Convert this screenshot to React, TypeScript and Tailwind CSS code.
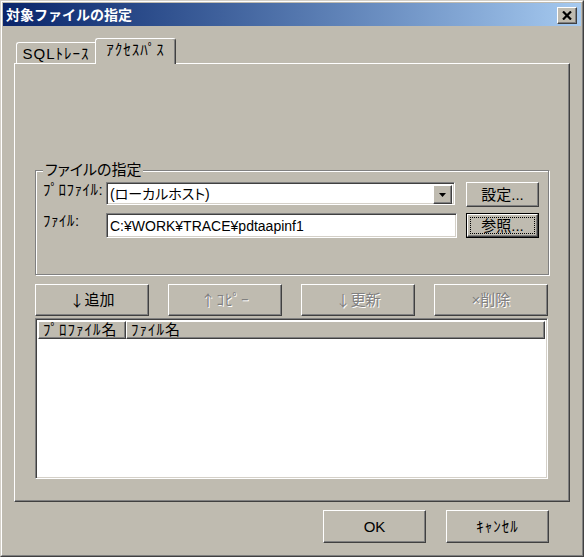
import type { ReactNode } from "react";

const face = "bg-[#bfbbb0]";
const raised =
  "border border-t-white border-l-white border-r-[#404040] border-b-[#404040] shadow-[inset_-1px_-1px_#808080]";
const sunken =
  "border border-t-[#808080] border-l-[#808080] border-r-white border-b-white shadow-[inset_1px_1px_#404040,inset_-1px_-1px_#d4d0c8]";
const grayed = "text-[#808080] [text-shadow:1px_1px_0_#ffffff]";
const arrow = "font-['Noto_Sans_CJK_JP',sans-serif]";

function Button({
  children,
  className = "",
  disabled = false,
}: {
  children: ReactNode;
  className?: string;
  disabled?: boolean;
}) {
  return (
    <button
      type="button"
      className={`${raised} ${face} flex items-center justify-center whitespace-nowrap leading-[16px] ${
        disabled ? grayed : "text-black"
      } ${className}`}
    >
      {children}
    </button>
  );
}

export default function App() {
  return (
    <div
      className={`h-[557px] w-[584px] ${face} font-['Liberation_Sans','Noto_Sans_CJK_JP',sans-serif] text-[15px] text-black`}
    >
      <div className="flex h-full flex-col border border-t-[#d4d0c8] border-l-[#d4d0c8] border-r-[#404040] border-b-[#404040]">
        <div className="flex flex-1 flex-col border border-t-white border-l-white border-r-[#808080] border-b-[#808080] p-px">
          {/* title bar */}
          <div className="flex h-[23px] items-center justify-between bg-linear-to-r from-[#0a246a] to-[#a6caf0] pl-[3px] pr-[4px]">
            <span className="text-[14px] font-bold leading-[16px] text-white">
              対象ファイルの指定
            </span>
            <button
              type="button"
              className={`${raised} ${face} mt-px flex h-[17px] w-[20px] items-center justify-center`}
            >
              <svg width="10" height="9" viewBox="0 0 10 9">
                <path d="M1 0.5 L9 8.5 M9 0.5 L1 8.5" stroke="#000" strokeWidth="2.2" />
              </svg>
            </button>
          </div>

          {/* tabs */}
          <div className="mt-[12px] flex items-end pl-[13px]">
            <div className="flex h-[21px] w-[79px] items-center justify-center whitespace-nowrap rounded-tl-[3px] border-l border-t border-white pt-[1px] leading-[16px] tracking-[1px]">
              SQLﾄﾚｰｽ
            </div>
            <div
              className={`relative z-10 -mb-px flex h-[26px] w-[81px] items-start justify-center whitespace-nowrap rounded-t-[3px] border-l border-r border-t border-white border-r-[#404040] ${face} pt-[3px] leading-[16px] tracking-[1px] shadow-[inset_-1px_0_#808080]`}
            >
              ｱｸｾｽﾊﾟｽ
            </div>
          </div>

          {/* tab panel */}
          <div className="ml-[11px] flex h-[439px] w-[556px] flex-col border border-t-white border-l-white border-r-[#404040] border-b-[#404040] shadow-[inset_-1px_-1px_#808080]">
            <fieldset className="ml-[20px] mt-[99px] w-[514px] border border-[#808080] pb-[36px] pl-[7px] pt-[5px] shadow-[inset_1px_1px_#ffffff,1px_1px_#ffffff]">
              <legend className={`${face} px-[2px] leading-[14px] [font-feature-settings:'palt']`}>
                ファイルの指定
              </legend>
              <div className="flex flex-col gap-[6px]">
                <div className="flex h-[25px] items-start">
                  <span className="w-[63px] shrink-0 whitespace-nowrap leading-[16px] tracking-[0.5px]">
                    ﾌﾟﾛﾌｧｲﾙ:
                  </span>
                  <div className={`${sunken} flex h-[23px] w-[349px] bg-white p-[2px]`}>
                    <span className="flex-1 pl-[1px] text-[14px] leading-[19px] [font-feature-settings:'palt']">
                      (ローカルホスト)
                    </span>
                    <span className={`${raised} ${face} flex h-[19px] w-[19px] items-center justify-center`}>
                      <svg width="7" height="4" viewBox="0 0 7 4">
                        <path d="M0 0 H7 L3.5 4 Z" fill="#000" />
                      </svg>
                    </span>
                  </div>
                  <Button className="ml-[11px] h-[25px] w-[73px]">設定...</Button>
                </div>
                <div className="flex h-[25px] items-start">
                  <span className="w-[63px] shrink-0 whitespace-nowrap leading-[16px] tracking-[0.5px]">
                    ﾌｧｲﾙ:
                  </span>
                  <div className={`${sunken} flex h-[25px] w-[351px] items-center bg-white pl-[3px] text-[14px] leading-[16px]`}>
                    C:¥WORK¥TRACE¥pdtaapinf1
                  </div>
                  <button
                    type="button"
                    className={`ml-[9px] h-[25px] w-[73px] border border-black ${face} p-0`}
                  >
                    <span className={`${raised} flex h-full w-full p-[2px]`}>
                      <span className="flex h-full w-full items-center justify-center border border-dotted border-black leading-[16px]">
                        参照...
                      </span>
                    </span>
                  </button>
                </div>
              </div>
            </fieldset>

            {/* action buttons */}
            <div className="ml-[20px] mt-[9px] flex gap-[19px]">
              <Button className="h-[32px] w-[114px]">
                <span className={arrow}>↓</span>追加
              </Button>
              <Button className="h-[32px] w-[114px] tracking-[1px]" disabled>
                <span className={arrow}>↑</span>ｺﾋﾟｰ
              </Button>
              <Button className="h-[32px] w-[114px]" disabled>
                <span className={arrow}>↓</span>更新
              </Button>
              <Button className="h-[32px] w-[114px]" disabled>
                ×削除
              </Button>
            </div>

            {/* list view */}
            <div className={`${sunken} ml-[20px] mt-[2px] flex h-[161px] w-[513px] flex-col bg-white p-[2px]`}>
              <div className="flex h-[18px] shrink-0">
                <div className={`${raised} ${face} flex w-[88px] items-center whitespace-nowrap pl-[4px] leading-[16px] tracking-[1px]`}>
                  ﾌﾟﾛﾌｧｲﾙ名
                </div>
                <div className={`${raised} ${face} flex flex-1 items-center whitespace-nowrap pl-[4px] leading-[16px] tracking-[1px]`}>
                  ﾌｧｲﾙ名
                </div>
              </div>
              <div className="flex-1 bg-white" />
            </div>
          </div>

          {/* dialog buttons */}
          <div className="mt-[8px] flex justify-end gap-[20px] pr-[32px]">
            <Button className="h-[33px] w-[103px]">OK</Button>
            <Button className="h-[33px] w-[103px] tracking-[1px]">ｷｬﾝｾﾙ</Button>
          </div>
        </div>
      </div>
    </div>
  );
}
